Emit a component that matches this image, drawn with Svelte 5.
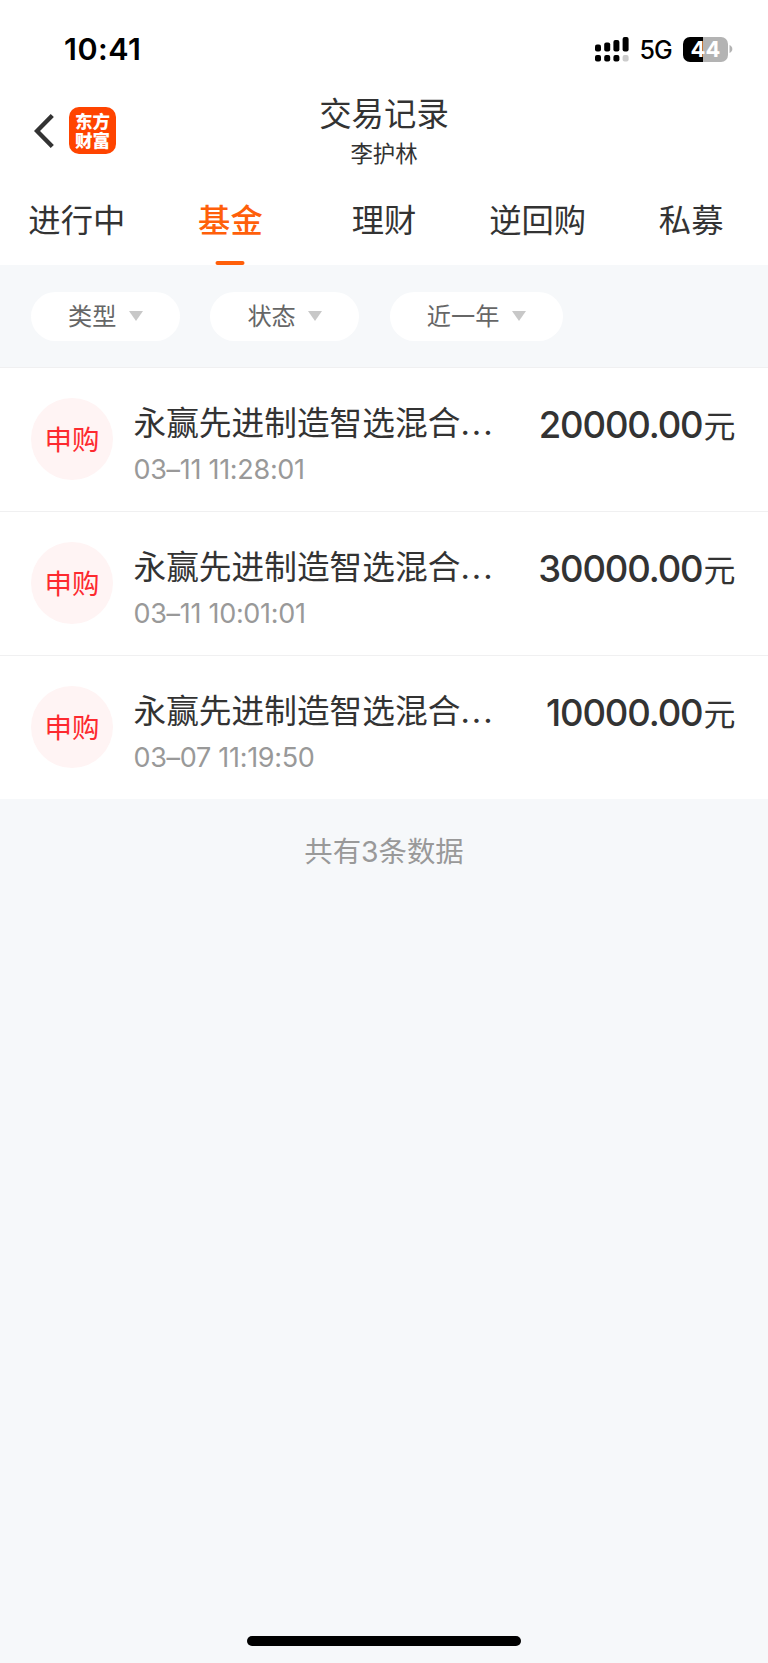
<script lang="ts">
  interface TradeRecord {
    type: string;
    name: string;
    time: string;
    amount: string;
  }

  const tabs = ['进行中', '基金', '理财', '逆回购', '私募'];
  const filters = ['类型', '状态', '近一年'];

  const records: TradeRecord[] = [
    { type: '申购', name: '永赢先进制造智选混合', time: '03–11 11:28:01', amount: '20000.00' },
    { type: '申购', name: '永赢先进制造智选混合', time: '03–11 10:01:01', amount: '30000.00' },
    { type: '申购', name: '永赢先进制造智选混合', time: '03–07 11:19:50', amount: '10000.00' }
  ];

  let activeTab = $state('基金');
</script>

<div class="page">
  <div class="status-bar">
    <span class="clock">10:41</span>
    <div class="status-icons">
      <svg class="signal" width="34" height="25" viewBox="0 0 34 25">
        <rect x="0" y="7.5" width="6" height="7" rx="2" />
        <rect x="9.2" y="5.5" width="6" height="9" rx="2" />
        <rect x="18.4" y="3" width="6" height="11.5" rx="2" />
        <rect x="27.6" y="0" width="6" height="14.5" rx="2" />
        <rect x="0" y="18" width="6" height="6.4" rx="2" />
        <rect x="9.2" y="18" width="6" height="6.4" rx="2" />
        <rect x="18.4" y="18" width="6" height="6.4" rx="2" />
        <rect x="27.6" y="18" width="6" height="6.4" rx="2" fill="#ccc" />
      </svg>
      <span class="network">5G</span>
      <div class="battery">
        <span class="battery-body">44</span>
        <svg width="4" height="8" viewBox="0 0 4 8">
          <path d="M0.5 0C4.3 1.4 4.3 6.6 0.5 8Z" fill="#b3b3b3" />
        </svg>
      </div>
    </div>
  </div>

  <header class="nav">
    <div class="nav-left">
      <svg class="back" width="21" height="36" viewBox="0 0 21 36">
        <path d="M18.3 2.5L3 18L18.3 33.5" fill="none" stroke="#333" stroke-width="4.4" />
      </svg>
      <div class="logo">
        <span>东方</span>
        <span>财富</span>
      </div>
    </div>
    <div class="nav-title">
      <h1>交易记录</h1>
      <p>李护林</p>
    </div>
    <div></div>
  </header>

  <nav class="tabs">
    {#each tabs as tab}
      <button class="tab" class:active={tab === activeTab} onclick={() => (activeTab = tab)}>
        {tab}
      </button>
    {/each}
  </nav>

  <div class="filters">
    {#each filters as filter}
      <button class="filter">
        <span>{filter}</span>
        <svg width="14" height="10" viewBox="0 0 14 10">
          <path d="M0 0H14L7 10Z" fill="#c8c8c8" />
        </svg>
      </button>
    {/each}
  </div>

  <div class="records">
    {#each records as record}
      <div class="record">
        <div class="badge">{record.type}</div>
        <div class="info">
          <div class="name">{record.name}<span class="dots">...</span></div>
          <div class="time">{record.time}</div>
        </div>
        <div class="amount">{record.amount}<span class="unit">元</span></div>
      </div>
    {/each}
  </div>

  <p class="total">共有3条数据</p>

  <div class="home-indicator"></div>
</div>

<style>
  :global(body) {
    margin: 0;
    background: #f6f8fa;
  }

  .page {
    display: flex;
    flex-direction: column;
    width: 768px;
    height: 1663px;
    overflow: hidden;
    background: #f6f8fa;
    color: #333;
    font-family: Inter, 'Noto Sans CJK SC', sans-serif;
  }

  button {
    margin: 0;
    padding: 0;
    border: 0;
    background: none;
    color: inherit;
    font-family: inherit;
  }

  h1,
  p {
    margin: 0;
    font-weight: 400;
  }

  .status-bar {
    display: flex;
    justify-content: space-between;
    box-sizing: border-box;
    height: 90px;
    padding: 30px 35px 0 64px;
    background: #fff;
    color: #000;
  }

  .clock {
    font-size: 30.5px;
    font-weight: 600;
    letter-spacing: 0.5px;
    line-height: 38px;
  }

  .status-icons {
    display: flex;
    align-items: center;
    height: 38px;
  }

  .network {
    margin-left: 10px;
    padding-top: 1px;
    font-size: 25px;
    font-weight: 500;
    letter-spacing: -0.8px;
    line-height: 38px;
  }

  .battery {
    display: flex;
    align-items: center;
    gap: 1px;
    margin-left: 11px;
  }

  .battery-body {
    width: 45px;
    height: 25px;
    border-radius: 7px;
    background: linear-gradient(to right, #000 44%, #b3b3b3 44%);
    color: #fff;
    font-size: 22px;
    font-weight: 700;
    line-height: 25px;
    text-align: center;
  }

  .nav {
    display: grid;
    grid-template-columns: 1fr auto 1fr;
    height: 85px;
    background: #fff;
  }

  .nav-left {
    display: flex;
    align-items: center;
    height: 81px;
    padding-left: 34px;
  }

  .logo {
    display: flex;
    flex-direction: column;
    align-items: center;
    justify-content: center;
    width: 47px;
    height: 47px;
    margin-left: 14px;
    border-radius: 10px;
    background: #ff4400;
    color: #fff;
    font-size: 17.5px;
    font-weight: 900;
    line-height: 19px;
  }

  .nav-title {
    text-align: center;
  }

  .nav-title h1 {
    font-size: 32.4px;
    line-height: 49px;
  }

  .nav-title p {
    font-size: 22.4px;
    line-height: 29px;
  }

  .tabs {
    display: flex;
    height: 90px;
    background: #fff;
  }

  .tab {
    position: relative;
    flex: 1;
    height: 90px;
    font-size: 32.3px;
    line-height: 91px;
  }

  .tab.active {
    color: #ff5f0a;
    font-weight: 500;
  }

  .tab.active::after {
    content: '';
    position: absolute;
    bottom: 0;
    left: 50%;
    width: 29px;
    height: 4px;
    border-radius: 2px;
    background: #ff5f0a;
    transform: translateX(-50%);
  }

  .filters {
    display: flex;
    gap: 30.5px;
    padding: 26.5px 31px;
  }

  .filter {
    display: flex;
    align-items: center;
    height: 49px;
    padding: 0 37px;
    border-radius: 25px;
    background: #fff;
    color: #666;
    font-size: 24.2px;
    line-height: 49px;
  }

  .filter svg {
    margin-left: 12.5px;
  }

  .records {
    background: #fff;
  }

  .record {
    display: flex;
    box-sizing: border-box;
    height: 144px;
    padding: 30px 32.5px 0 31px;
    border-top: 1px solid #f0f0f1;
  }

  .badge {
    flex: none;
    width: 82px;
    height: 82px;
    border-radius: 50%;
    background: #fff4f4;
    color: #fd2a2f;
    font-size: 27.5px;
    line-height: 84px;
    text-align: center;
  }

  .info {
    flex: none;
    margin-left: 20.5px;
  }

  .name {
    font-size: 32.7px;
    line-height: 50px;
    white-space: nowrap;
  }

  .dots {
    letter-spacing: 2px;
  }

  .time {
    margin-top: 4px;
    color: #999;
    font-size: 27px;
    letter-spacing: -0.3px;
    line-height: 36px;
  }

  .amount {
    flex: 1;
    font-size: 36.5px;
    font-weight: 500;
    letter-spacing: -1.15px;
    line-height: 55px;
    text-align: right;
    white-space: nowrap;
  }

  .unit {
    margin-left: 1px;
    font-size: 32px;
    font-weight: 400;
    letter-spacing: 0;
  }

  .total {
    margin-top: 33px;
    color: #999;
    font-size: 28.4px;
    line-height: 40px;
    text-align: center;
  }

  .home-indicator {
    width: 274px;
    height: 10px;
    margin: auto auto 17px;
    border-radius: 5px;
    background: #000;
  }
</style>
